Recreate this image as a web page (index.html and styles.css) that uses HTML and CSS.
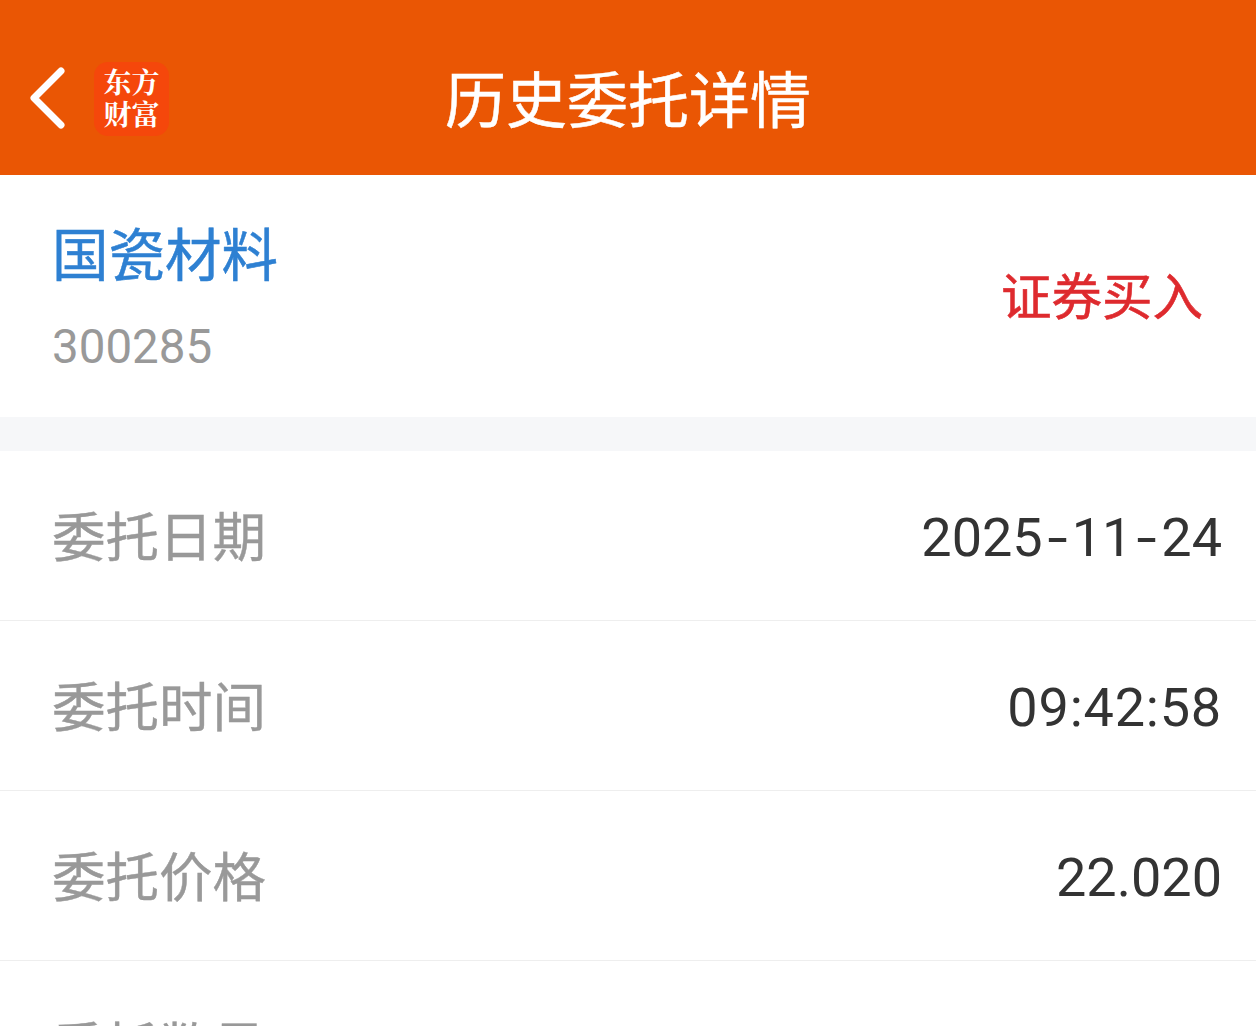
FILE: index.html
```html
<!DOCTYPE html>
<html lang="zh-CN">
<head>
<meta charset="utf-8">
<title>历史委托详情</title>
<link rel="stylesheet" href="styles.css">
</head>
<body>
<div class="page">
  <header class="topbar">
    <svg class="back" viewBox="0 0 40 64" width="40" height="64"><path d="M33 4 L6 31 L33 58" fill="none" stroke="#fff" stroke-width="7" stroke-linecap="round" stroke-linejoin="round"/></svg>
    <div class="logo"><span>东方</span><span>财富</span></div>
    <h1 class="title">历史委托详情</h1>
  </header>
  <section class="stock">
    <div class="stock-id">
      <div class="stock-name">国瓷材料</div>
      <div class="stock-code">300285</div>
    </div>
    <div class="side">证券买入</div>
  </section>
  <div class="gap"></div>
  <section class="rows">
    <div class="row"><span class="label">委托日期</span><span class="value">2025<span class="dash">-</span>11<span class="dash">-</span>24</span></div>
    <div class="row"><span class="label">委托时间</span><span class="value value-time">09:42:58</span></div>
    <div class="row"><span class="label">委托价格</span><span class="value">22.020</span></div>
    <div class="row"><span class="label">委托数量</span><span class="value"></span></div>
  </section>
</div>
</body>
</html>
```
FILE: styles.css
```css
* { box-sizing: border-box; margin: 0; padding: 0; }
html, body { height: 100%; overflow: hidden; background: #fff; }
body { font-family: "Noto Sans CJK SC", "Noto Sans", sans-serif; }
.page { width: 1256px; height: 1026px; overflow: hidden; }
.topbar { position: relative; height: 175px; background: #ea5604; display: flex; align-items: center; padding: 22px 0 0 28px; }
.back { display: block; flex: none; }
.logo { width: 75px; height: 74px; margin-left: 26px; margin-top: 1px; padding-bottom: 5px; border-radius: 14px; background: #f5470b; color: #fff; display: flex; flex-direction: column; align-items: center; justify-content: center; font-family: "Noto Serif CJK SC", "Noto Sans CJK SC", sans-serif; font-weight: 700; font-size: 28px; line-height: 32px; }
.title { position: absolute; left: 0; right: 0; top: 57px; text-align: center; color: #fff; font-size: 61px; font-weight: 400; line-height: 80px; -webkit-text-stroke: 0.5px #fff; }
.stock { height: 242px; display: flex; align-items: center; justify-content: space-between; padding: 0 53px 0 52px; }
.stock-id { display: flex; flex-direction: column; }
.stock-name { color: #2e80d2; font-size: 56.5px; line-height: 80px; margin-top: -4px; -webkit-text-stroke: 0.5px #2e80d2; }
.stock-code { color: #999; font-size: 47.5px; line-height: 60px; margin-top: 26px; font-family: "Roboto", "Noto Sans", sans-serif; }
.side { color: #de2a2e; font-size: 50.5px; line-height: 70px; margin-top: -6px; -webkit-text-stroke: 0.6px #de2a2e; }
.gap { height: 34px; background: #f6f7f9; }
.row { height: 170px; display: flex; align-items: center; justify-content: space-between; padding: 0 34px 0 52px; border-bottom: 1px solid #eeeeee; }
.label { color: #999; font-size: 53.5px; line-height: 70px; margin-top: -4px; -webkit-text-stroke: 0.4px #999; }
.value { color: #333; font-size: 54px; line-height: 70px; margin-top: 5px; font-family: "Roboto", "Noto Sans", sans-serif; }
.value-time { letter-spacing: 0.8px; }
.dash { display: inline-block; margin: 0 7px; transform: scaleX(1.35); }
```
